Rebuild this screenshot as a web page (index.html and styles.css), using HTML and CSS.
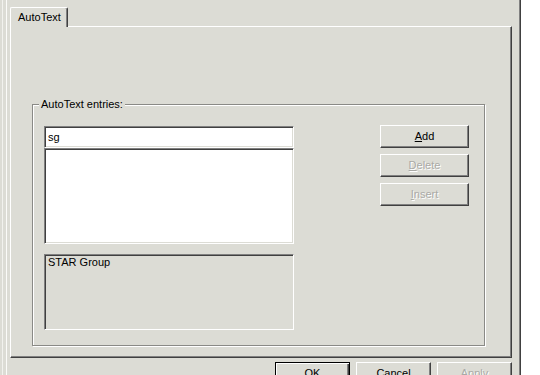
FILE: index.html
```html
<!DOCTYPE html>
<html>
<head>
<meta charset="utf-8">
<link rel="stylesheet" href="styles.css">
</head>
<body>
<div class="window">
  <div class="tabs">
    <div class="tab">AutoText</div>
  </div>
  <div class="panel">
    <div class="group">
      <span class="group-label">AutoText entries:</span>
      <div class="group-body">
        <div class="left-col">
          <div class="edit">sg</div>
          <div class="list"></div>
          <div class="preview">STAR Group</div>
        </div>
        <div class="right-col">
          <div class="btn"><span><u>A</u>dd</span></div>
          <div class="btn disabled"><span><u>D</u>elete</span></div>
          <div class="btn disabled"><span><u>I</u>nsert</span></div>
        </div>
      </div>
    </div>
  </div>
  <div class="footer">
    <div class="btn wide default"><span>OK</span></div>
    <div class="btn wide"><span>Cancel</span></div>
    <div class="btn wide disabled"><span>Apply</span></div>
  </div>
</div>
</body>
</html>
```

FILE: styles.css
```css
html, body {
  margin: 0;
  padding: 0;
  background: #ffffff;
  overflow: hidden;
}

body {
  width: 540px;
  height: 375px;
  font-family: "Liberation Sans", Arial, sans-serif;
  font-size: 11px;
  line-height: 13px;
  color: #000;
}

.window {
  box-sizing: border-box;
  width: 521px;
  height: 375px;
  padding: 7px 0 0 10px;
  background:
    linear-gradient(to right,
      transparent 2px, #f2f2ee 2px, #f2f2ee 3px, transparent 3px,
      transparent 6px, #fbfbf9 6px, #fbfbf9 7px, transparent 7px),
    #dcdcd5;
  border-right: 1px solid #404040;
  box-shadow: inset -1px 0 0 #808080;
}

.tabs {
  display: flex;
  height: 20px;
  margin-bottom: -1px;
  position: relative;
  z-index: 1;
}

.tab {
  box-sizing: border-box;
  height: 20px;
  padding: 3px 6px 0 7px;
  background: #dcdcd5;
  border-top: 1px solid #ffffff;
  border-left: 1px solid #ffffff;
  border-right: 1px solid #404040;
  box-shadow: inset -1px 0 0 #808080;
  border-top-left-radius: 2px;
  border-top-right-radius: 2px;
}

.panel {
  box-sizing: border-box;
  width: 502px;
  height: 332px;
  padding: 77px 0 0 21px;
  border-top: 1px solid #ffffff;
  border-left: 1px solid #ffffff;
  border-right: 1px solid #404040;
  border-bottom: 1px solid #404040;
  box-shadow: inset -1px -1px 0 #808080;
}

.group {
  position: relative;
  box-sizing: border-box;
  width: 453px;
  height: 242px;
  border: 1px solid #8a8a86;
  box-shadow: inset 1px 1px 0 #ffffff, 1px 1px 0 #ffffff;
  padding: 21px 0 0 11px;
}

.group-label {
  position: absolute;
  top: -7px;
  left: 6px;
  padding: 0 2px;
  background: #dcdcd5;
}

.group-body {
  display: flex;
  gap: 86px;
}

.left-col {
  display: flex;
  flex-direction: column;
  width: 250px;
}

.edit,
.list,
.preview {
  box-sizing: border-box;
  border-style: solid;
  border-width: 1px;
  border-color: #808080 #ffffff #ffffff #808080;
  box-shadow: inset 1px 1px 0 #404040, inset -1px -1px 0 #dcdcd5;
}

.edit {
  height: 22px;
  padding: 4px 3px 0 3px;
  background: #ffffff;
}

.list {
  height: 96px;
  background: #ffffff;
}

.preview {
  height: 76px;
  margin-top: 10px;
  padding: 1px 3px;
  background: #dcdcd5;
}

.right-col {
  display: flex;
  flex-direction: column;
  gap: 6px;
  margin-top: -1px;
}

.btn {
  box-sizing: border-box;
  width: 89px;
  height: 23px;
  display: flex;
  align-items: center;
  justify-content: center;
  background: #dcdcd5;
  border-style: solid;
  border-width: 1px;
  border-color: #ffffff #404040 #404040 #ffffff;
  box-shadow: inset -1px -1px 0 #808080;
}

.btn.disabled span {
  color: #aaaaa6;
  text-shadow: 1px 1px 0 #ffffff;
}

.footer {
  display: flex;
  justify-content: flex-end;
  gap: 6px;
  width: 502px;
  margin-top: 4px;
}

.btn.wide {
  width: 75px;
}

.btn.default {
  border-color: #000000;
  box-shadow: inset 1px 1px 0 #ffffff, inset -1px -1px 0 #404040, inset -2px -2px 0 #808080;
}
```
